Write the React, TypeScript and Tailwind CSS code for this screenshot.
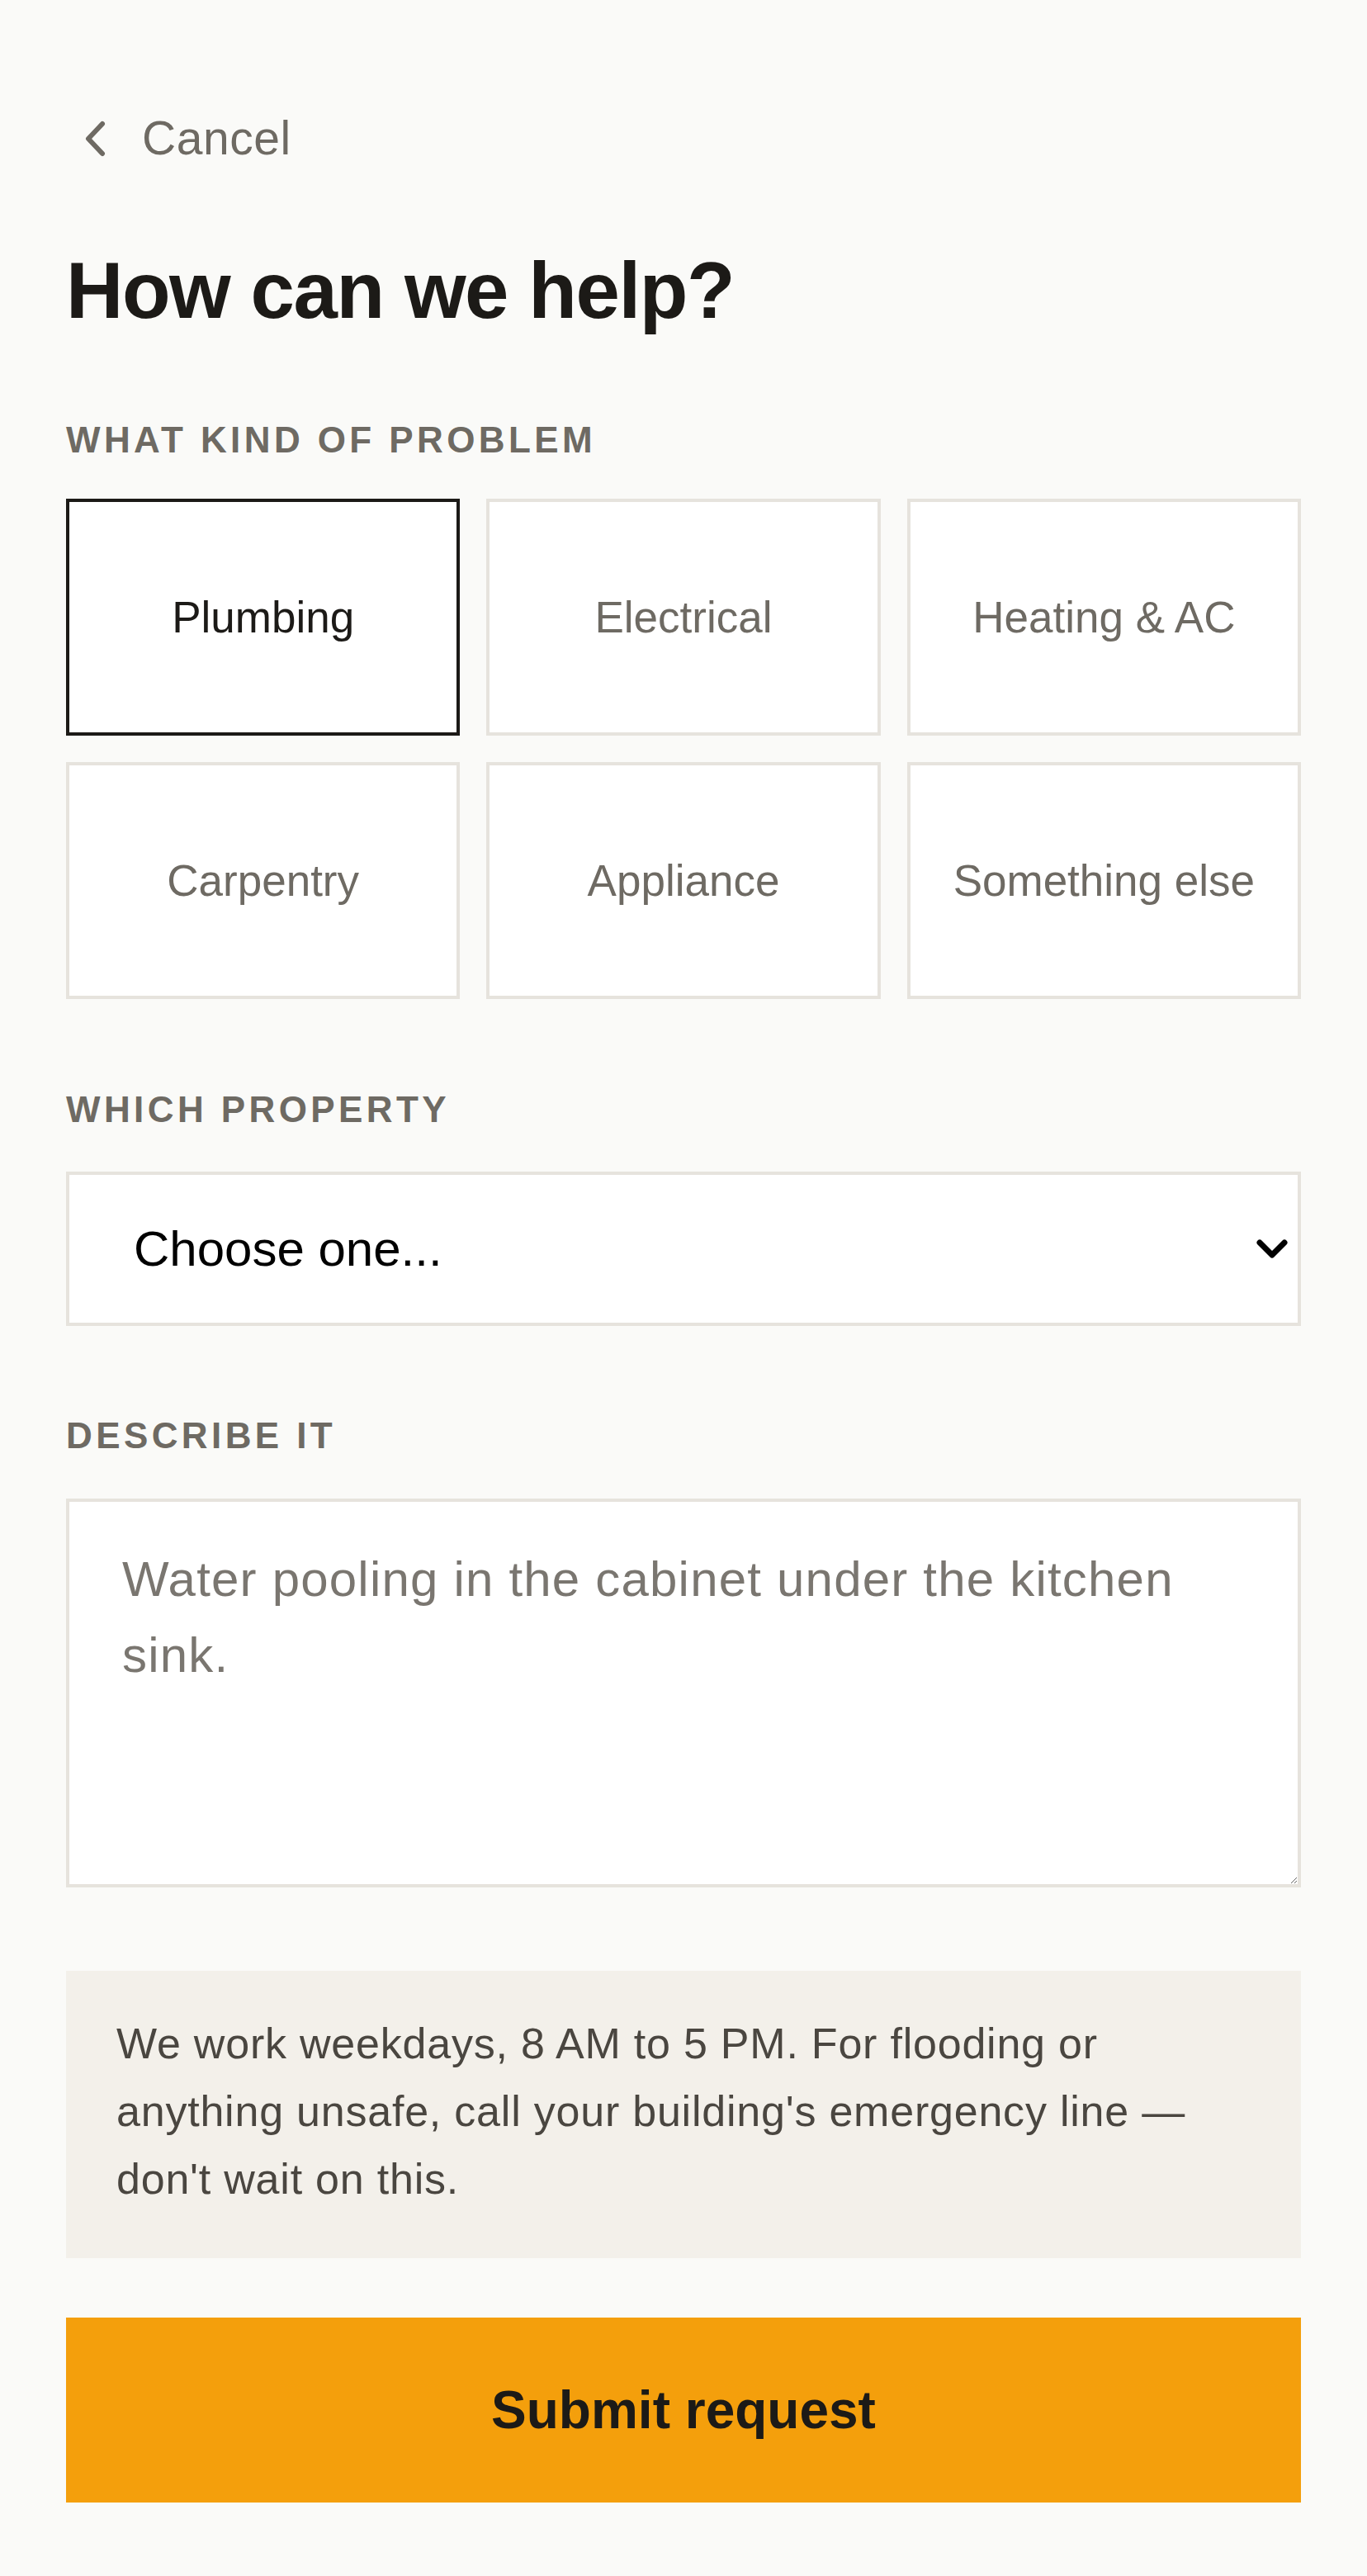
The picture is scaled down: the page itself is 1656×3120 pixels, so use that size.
import { useState } from 'react';

const problems = ['Plumbing', 'Electrical', 'Heating & AC', 'Carpentry', 'Appliance', 'Something else'];

function FieldLabel({ children, className = '' }: { children: React.ReactNode; className?: string }) {
  return (
    <div className={`text-[44px] leading-[44px] font-bold tracking-[0.1em] text-[#6e6a63] uppercase ${className}`}>
      {children}
    </div>
  );
}

export default function App() {
  const [problem, setProblem] = useState('Plumbing');

  return (
    <div className="min-h-screen bg-[#fafaf8] font-['Liberation_Sans',Arial,sans-serif]">
      <div className="px-[80px] pt-[128px] pb-[88px]">
        <button className="h-[80px] flex items-center gap-[42px] pl-[20px] text-[57px] tracking-[0.01em] text-[#6e6a63]">
          <svg width="30" height="44" viewBox="0 0 30 44" fill="none">
            <path d="M24 4 L7 22 L24 40" stroke="#6e6a63" strokeWidth="6" strokeLinecap="round" strokeLinejoin="round" />
          </svg>
          Cancel
        </button>

        <h1 className="mt-[91px] text-[96px] leading-[106px] font-bold tracking-[-0.015em] text-[#1c1a17]">
          How can we help?
        </h1>

        <FieldLabel className="mt-[106px]">What kind of problem</FieldLabel>
        <div className="mt-[49px] grid grid-cols-3 gap-[32px]">
          {problems.map((p) => {
            const active = p === problem;
            return (
              <button
                key={p}
                onClick={() => setProblem(p)}
                className={
                  active
                    ? 'h-[287px] bg-white border-[4px] border-[#1c1a17] text-[#1c1a17] text-[53px] font-medium'
                    : 'h-[287px] bg-white border-[4px] border-[#e6e3dd] text-[#6e6a63] text-[53px] font-medium'
                }
              >
                {p}
              </button>
            );
          })}
        </div>

        <FieldLabel className="mt-[112px]">Which property</FieldLabel>
        <div className="relative mt-[53px]">
          <select className="w-full h-[187px] appearance-none bg-white border-[4px] border-[#e6e3dd] pl-[78px] pr-[100px] text-[60px] text-black outline-none">
            <option>Choose one...</option>
            <option>12 Elm Street, Unit 4</option>
            <option>88 Harbor Road</option>
          </select>
          <svg
            className="absolute right-[16px] top-1/2 -translate-y-1/2 pointer-events-none"
            width="38"
            height="28"
            viewBox="0 0 38 28"
            fill="none"
          >
            <path d="M4 6 L19 21 L34 6" stroke="#000" strokeWidth="7" strokeLinecap="round" strokeLinejoin="round" />
          </svg>
        </div>

        <FieldLabel className="mt-[111px]">Describe it</FieldLabel>
        <textarea
          className="mt-[54px] block w-full h-[471px] bg-white border-[4px] border-[#e6e3dd] pt-[48px] px-[64px] text-[60px] leading-[92px] tracking-[0.02em] text-[#1c1a17] placeholder:text-[#7a7670] outline-none"
          placeholder={'Water pooling in the cabinet under the kitchen\nsink.'}
        />

        <div className="mt-[101px] bg-[#f3f0ea] pt-[47px] pb-[55px] pl-[61px] pr-[100px] text-[52px] leading-[82px] tracking-[0.015em] text-[#4a4640]">
          We work weekdays, 8 AM to 5 PM. For flooding or anything unsafe, call your building's emergency line —
          don't wait on this.
        </div>

        <button className="mt-[72px] w-full h-[224px] bg-[#f49f0c] text-[64px] font-bold text-[#1c1a17]">
          Submit request
        </button>
      </div>
    </div>
  );
}
